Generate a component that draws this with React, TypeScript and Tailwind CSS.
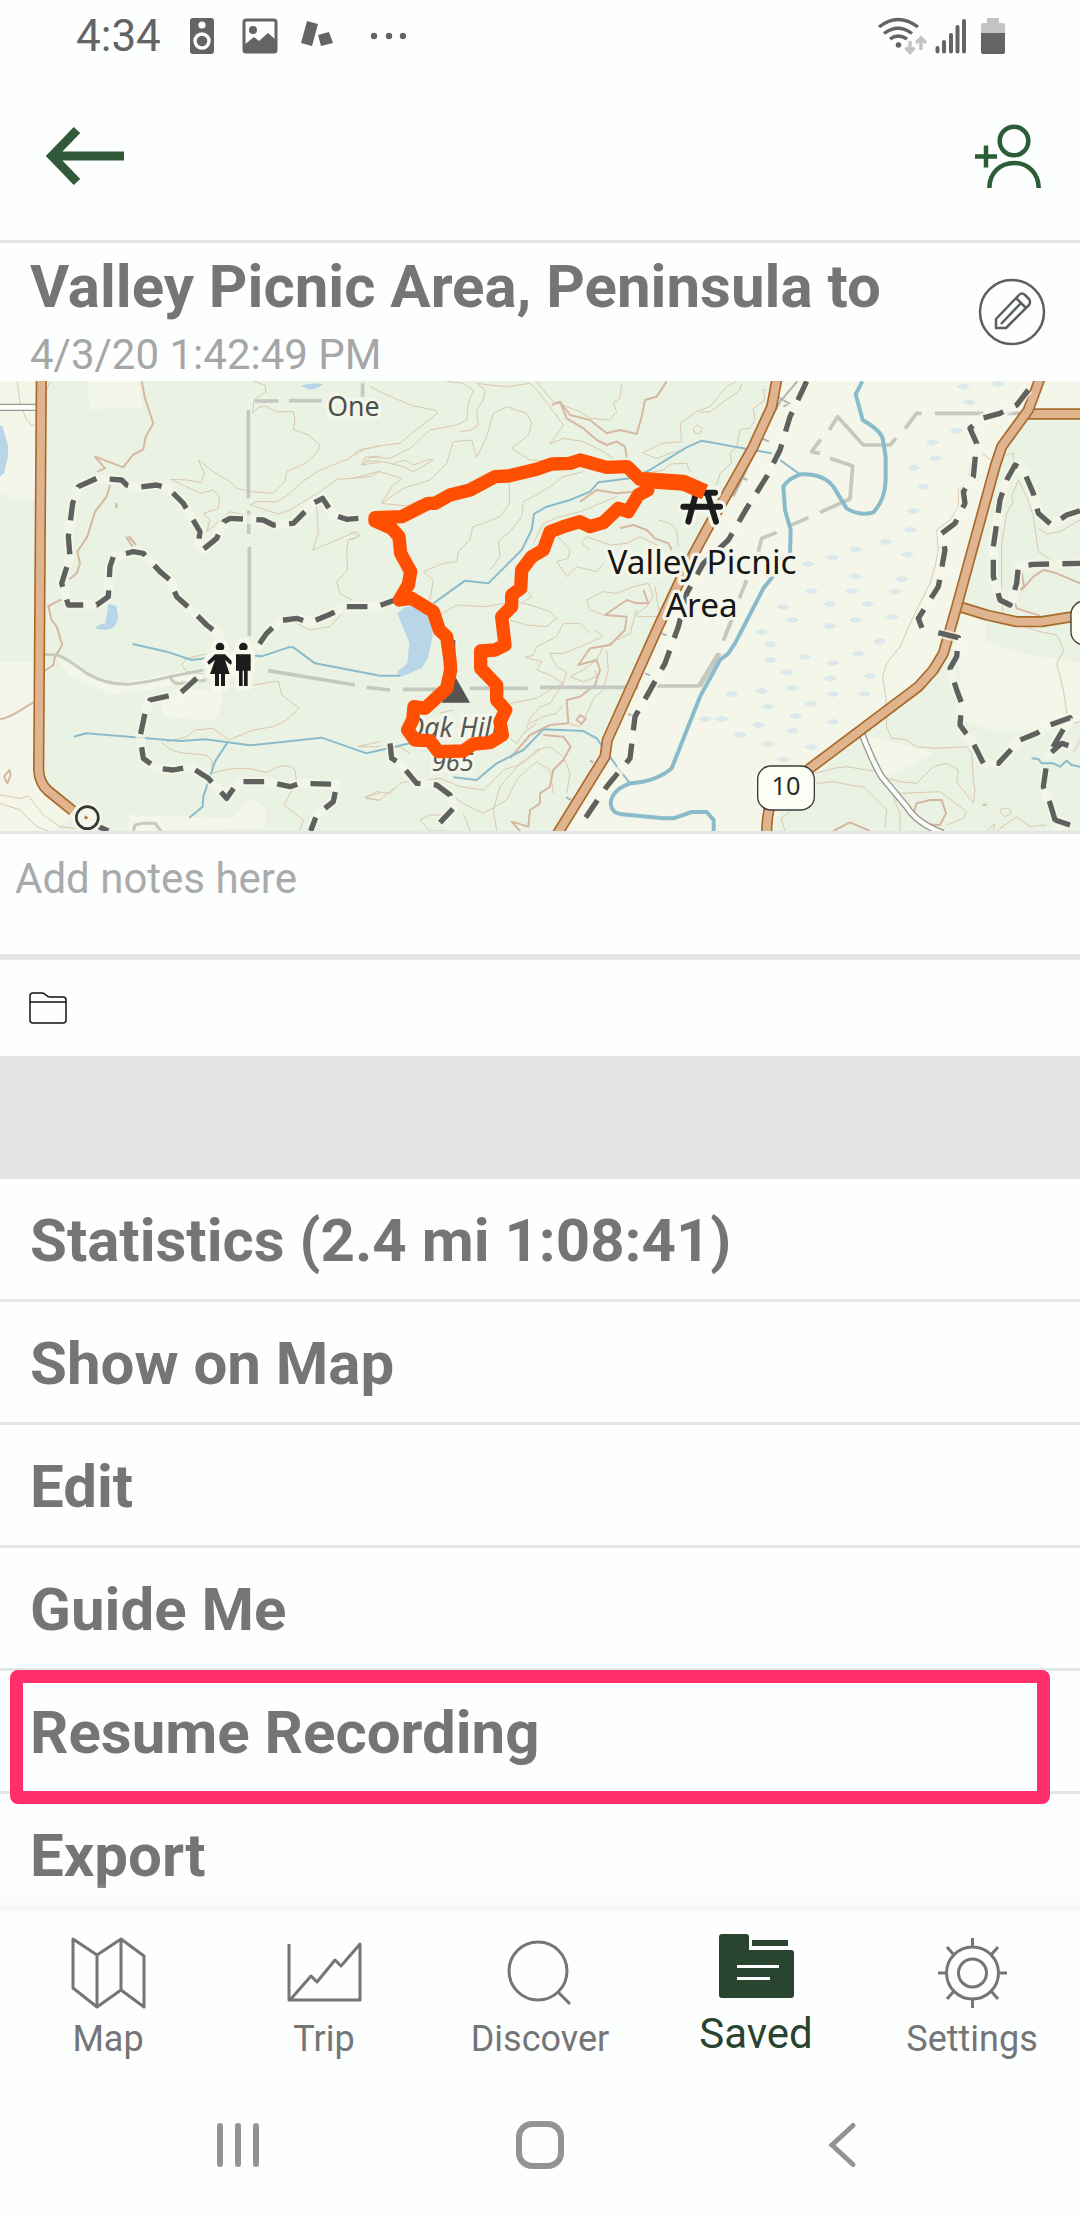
import type { ReactNode } from 'react';

const TRACK =
    'M1060 365L1000 337L885 328L870 328L832 290L770 292L690 270L660 280L605 282L560 298L475 318L435 320L360 360L300 375L255 400L235 400L155 440L75 443L75 453L125 475L147 500L152 550L182 605L175 645L148 690L185 685L250 725L268 780L290 800L300 870L302 900L290 955L225 1015L192 1010L188 1050L173 1080L195 1110L240 1112L265 1145L340 1143L370 1122L420 1118L457 1095L450 1055L467 1020L440 990L440 945L392 895L392 843L435 840L465 825L455 740L485 710L485 675L512 655L515 600L545 560L580 540L600 485L640 470L690 455L720 470L760 458L805 415L835 425L865 375L893 360L885 328';

const TRAILS = {
    left: [
        'M1075 445L1040 448L1000 435L968 385L940 400L880 460L820 465L790 450L690 445L672 455L650 505L610 538L595 520L600 485L550 400L505 355L470 345L410 352L380 345L365 330L290 325L235 350L218 400L205 500L210 560L185 640L205 705L290 705L325 680L330 590L340 560L400 545L430 550L480 605L510 630L530 680L580 725L620 765L665 800',
        'M1200 685L1130 710L1040 710L985 735L930 758L890 745L840 752L800 790L765 840',
        'M590 925L540 970L450 990L437 1020L420 1100L430 1165L470 1195L520 1200L570 1190L625 1225L680 1285L715 1235L800 1235L870 1250L900 1240L1010 1243L1000 1295L950 1335L932 1383',
        'M285 1365L325 1383',
    ],
    center: ['M120 1120L125 1165L150 1180L200 1240L260 1245L300 1275L310 1315L270 1358', 'M308 810V850'],
    right: [
        'M320 34L270 140L240 240L200 320L140 415L85 510L10 580L-40 670L-65 770L-105 880L-155 970L-195 1040L-210 1165L-280 1250L-355 1360',
        'M985 60L950 105L900 130L845 145L810 175L830 220L820 320L790 365L795 400L765 460L725 490L735 540L715 650L655 745L670 785',
        'M715 788L775 803L770 860L750 895L770 960L785 1000L780 1065L820 1120L850 1180L895 1180L960 1110L1010 1090L1050 1065L1110 1043L1045 1155L1085 1120L1115 1130',
        'M1038 1195L1030 1250L1050 1300L1065 1350L1085 1383M1065 1350L1110 1365',
        'M1140 422L1100 435L1055 465L1015 430L1000 370L970 300L945 285L920 330L900 390L880 530L880 620L900 690L930 705L950 640L955 590L1000 583L1140 580',
    ],
};

const CONTOURS = {
    left: [
        'M52 34L60 100L80 150L95 168L108 160M150 34L140 60',
        'M760 34L795 45L797 65L762 90L758 130Q775 105 800 110L830 125L880 125L885 150L880 178L925 195L960 225Q955 250 915 280L860 305L855 335L820 370L755 365L710 355L690 335L640 305L595 270L612 310L605 338L560 330L512 328L560 350L600 370L640 360L658 380L655 415L610 430L630 450L620 485L650 460L690 425L730 435',
        'M750 405L770 395L830 395L865 375L900 340L960 300L1050 265L1075 240L1140 228',
        'M750 405L835 432L870 420L960 365L1010 328L1060 325L1140 303',
        'M1140 258L1095 262L1085 285L1100 275L1140 272',
        'M950 410L955 490L938 540L1000 515L1060 488L1078 500L1045 510L1040 540L1043 600L1010 635L1020 670L1055 690',
        'M1045 710L990 770L930 780L880 755',
        'M760 945L835 933L845 975L898 1015L860 1050L820 1070L760 1080L685 1110L640 1075L585 1080L560 1100L500 1115',
        'M485 1118Q520 1150 560 1150L620 1155L637 1175L635 1210Q720 1180 800 1208Q860 1170 885 1200L890 1235L852 1305L910 1350L900 1383',
        'M0 1275L60 1285L85 1278L130 1335L180 1370L225 1375',
        'M0 1300L60 1320L110 1370L145 1383',
        'M1140 1270L1095 1280L1140 1293M1140 1115L1072 1130L1140 1130',
        'M620 852L560 865L545 885L560 905L610 912',
    ],
    center: [
        'M60 50L110 75L190 108L255 120L262 130L185 190L150 220L80 228L40 240L0 262',
        'M35 285L60 262L120 265L180 235L240 180L320 165L350 150L355 100L370 60L340 40L290 34',
        'M35 285L100 275L160 290L190 305L250 270L235 268L190 285L165 270L130 280',
        'M330 185L365 180L385 165L380 120L400 90L405 60L380 40L420 45L470 50L540 40L560 60L600 110L640 165L600 222L640 205L700 215L760 245L790 265',
        'M0 325L60 320L90 305L155 325L125 350L95 400L170 408L210 390',
        'M95 400L160 355L240 330L290 280L310 215L365 210L380 262L410 200L430 130L470 110L530 130L545 160L535 195L485 235L540 270L620 275',
        'M560 34L580 60L610 95L650 110L690 125L720 145L780 150L800 125L790 100L810 85L815 40',
        'M478 340L478 400L450 440L400 460L368 470L360 510L325 545L320 575L280 580L220 605L250 630L240 690',
        'M700 305L640 320L600 350L560 375L520 395L515 440L485 480L445 515L450 560L420 600',
        'M270 735L320 705L400 710L500 695L540 705L600 725L620 745L590 770L530 765L480 750',
        'M530 660L545 680L520 695M625 500L660 540L655 565L620 575L650 620L680 590L740 605L760 580',
        'M550 520L580 460L630 440L690 425L800 380M720 540L695 520L710 500L780 525L830 520L870 500L920 525L930 535',
        'M875 250L935 220L995 215L990 160L1040 125L1080 110L1130 50L1160 34',
        'M880 250L920 265L965 248L1000 240M870 315L940 300L960 282L1010 280L1020 305',
        'M1035 190L1030 175L1042 165L1057 175L1050 190ZM925 450L960 460L980 480L985 530',
        'M720 790L690 760L640 760L620 800L560 830L550 855L525 862L575 875L560 900L600 915L640 940L600 960L560 985L480 1000',
        'M735 780L760 800L690 830L640 850L600 850L620 890L650 905L640 940L600 1000L570 1010L540 1045L530 1075',
        'M770 840L775 900L760 960L735 980L720 1010L690 1070L660 1062',
        'M760 735L720 720L710 690L760 665L800 670L850 650L895 640L910 680L890 710L860 730L865 740L930 740L915 650',
        'M860 720L840 790L760 830L740 870L700 900L660 920L700 935L740 920L735 900',
        'M640 1005L620 1030L580 1040L540 1060M480 1105L500 1120L520 1090L560 1060',
        'M650 1270L660 1210L640 1160L600 1130L560 1140L520 1180L460 1200L400 1260L330 1250L270 1225L200 1235',
        'M610 1270L600 1200L560 1175L530 1200L500 1230L470 1290L400 1330L340 1300L310 1280',
        'M45 1285L80 1265L120 1270L150 1240L190 1230M45 1285L90 1290L130 1255',
        'M570 1140L540 1160L510 1180L450 1250L430 1320L440 1383M340 1330L360 1383M210 1350L240 1383L290 1383M210 1350L240 1335L300 1335',
        'M0 490L20 485L30 495L10 508L0 505M180 1150L150 1130L100 1140M270 1030L310 1020',
    ],
    right: [
        'M0 127L30 125L80 90L120 60L125 40',
        'M200 60L190 60L195 90L160 115L165 150L150 175L120 178L110 230L90 250L95 280L60 310L50 345',
        'M815 260L805 330L775 360L775 410L750 450L710 480L715 540L705 590L690 640L640 740L600 830L560 880L548 920L558 990L560 1070L575 1105L615 1108L650 1130L710 1135L800 1130L815 1150L820 1230L825 1260L820 1300L770 1235L775 1200L740 1180L700 1190L650 1240L600 1235L560 1225',
        'M845 250L880 275M920 255L940 250L940 275M955 330L980 380L1000 440L1015 545L1070 580M955 330L935 380L940 395L920 430L905 520L905 690L910 735',
        'M1140 450L1080 485L1040 492L1015 475',
        'M960 765L1020 785L1070 795L1092 840L1070 880L1090 960L1102 1040',
        'M345 1210L400 1195L440 1190L530 1205L560 1235M350 1240L400 1235L450 1245L490 1250L520 1280L560 1320L555 1370',
        'M580 1285L600 1330L600 1383M600 1270L720 1265L800 1325L790 1345L740 1365',
        'M905 1315L925 1315L935 1330L915 1340L900 1325ZM860 1383L885 1360L880 1383M890 1383L950 1340L990 1370L1040 1365',
        'M240 1350L270 1325M245 1350L255 1383M1140 1055L1120 1060M1140 1110L1130 1130L1120 1145',
    ],
};

const HEAVY_CONTOURS = {
    left: [
        'M425 34L435 85L460 160L437 200L430 238L398 255L370 292L285 260L315 295L292 305',
        'M330 345L320 380L285 425L262 500L232 545L240 580L230 610L208 628',
        'M185 688L145 708L155 750L170 770L187 825L165 860L160 885L130 905',
        'M100 997C60 1020 40 1040 0 1048',
        'M378 500L398 530M386 498L408 525M349 398V415M28 1200L12 1220L22 1240L32 1215Z',
    ],
    center: [
        'M605 105L630 95L660 135L720 150L770 190L810 180L860 192L875 140L885 90L920 80L950 34',
        'M630 95L650 145L700 175L740 210L770 225L800 215L825 230L830 262',
        'M845 600M880 660L895 700L860 700L830 690L765 735L830 740L825 780L780 825L720 835L685 885L740 870L750 900L735 945L690 980L650 990L655 1060L600 1065L540 1095L480 1165',
        'M690 1035L680 1050L695 1062L708 1045Z',
        'M580 1095L640 1100L662 1130L640 1170L610 1200L600 1250L570 1270L570 1300L540 1320L535 1370L485 1355L510 1383',
        'M810 475L850 465L890 480L915 505L955 520L965 540M690 395L740 360L800 370L850 365',
    ],
    right: [
        'M965 660L1000 620L1030 600L1070 610L1140 640M965 605L972 650L960 660M945 700L950 715L1020 737',
        'M650 1300L690 1290L725 1290L738 1330L720 1365L680 1363L640 1330Z',
        'M400 1383L450 1357L510 1383M848 1304H860',
    ],
};

const MARSH = [
    [790, 50], [893, 42], [808, 97], [770, 182], [697, 218], [706, 265], [641, 293], [669, 350], [641, 423], [631, 480],
    [558, 516], [466, 538], [398, 563], [622, 554], [325, 582], [466, 619], [605, 628], [334, 664], [455, 664], [586, 664],
    [250, 711], [390, 702], [502, 702], [278, 749], [466, 749], [577, 740], [390, 768], [185, 786], [212, 823], [540, 814],
    [315, 861], [474, 851], [212, 870], [398, 879], [260, 907], [390, 926], [510, 918], [278, 954], [185, 963], [95, 972],
    [398, 972], [493, 972], [204, 1010], [334, 1001], [287, 1038], [66, 1047], [175, 1065], [398, 1056], [121, 1095],
    [278, 1083], [204, 1122], [334, 1131], [250, 1168], [17, 1047],
];

// The map is drawn in three sheets side by side, each sheet with its own origin
function Sheet({ at, children }: { at: 'left' | 'center' | 'right'; children: ReactNode }) {
    const x = { left: 0, center: 1050, right: 2100 }[at];
    return <g transform={`translate(${x} -33)`}>{children}</g>;
}

const SHEETS = ['left', 'center', 'right'] as const;

function Road({ d }: { d: string }) {
    return (
        <>
            <path d={d} stroke="#a96a2b" strokeWidth="34" />
            <path d={d} stroke="#dfb48f" strokeWidth="24" />
        </>
    );
}

function TrailMap() {
    return (
        <svg viewBox="0 0 3240 1350" className="block h-auto w-full bg-[#eaf3e3]" fill="none" strokeLinejoin="round" role="img" aria-label="Recorded track on map">
            {/* Land */}
            <g fill="#f5f6ea">
                <Sheet at="left">
                    <path d="M0 33H115V387H40L0 370ZM0 875H110V1200L150 1260L230 1330L160 1383H0ZM265 33H415L425 112L268 118Z" />
                    <path d="M480 1000L560 960L668 960L655 1035L640 1052L495 1040ZM385 1335L700 1345L750 1285L795 1310L795 1375L385 1383ZM170 865L330 945L600 895L610 925L450 960L330 972L200 910Z" />
                </Sheet>
                <Sheet at="right">
                    <path d="M232 33H1140V130H980L905 230L770 700L700 900L655 950L490 1070L190 1383H-440L-280 1110L-50 600L80 370Z" />
                    <path d="M845 33H1140V130H990ZM785 720L855 740L855 810L960 850L1140 880V1060L900 1090L790 1050L770 800ZM500 1100L560 1110L700 1150L600 1200L550 1220Z" />
                </Sheet>
            </g>
            {/* Water */}
            <Sheet at="right">
                <g fill="#dbe9ea">
                    {MARSH.map(([cx, cy]) => (
                        <path key={`${cx}-${cy}`} d={`M${cx - 20} ${cy}Q${cx - 10} ${cy - 10} ${cx} ${cy - 9}Q${cx + 12} ${cy - 9} ${cx + 20} ${cy}Q${cx + 8} ${cy + 10} ${cx} ${cy + 9}Q${cx - 12} ${cy + 9} ${cx - 20} ${cy}Z`} />
                    ))}
                </g>
            </Sheet>
            <g fill="#b9d6e9">
                <Sheet at="left">
                    <path d="M0 165L8 170L24 225V260L12 310L0 320ZM325 702L350 708L355 745Q345 780 320 780L288 776Q286 765 315 760L322 725ZM903 48Q935 35 970 42Q945 62 925 58Z" />
                </Sheet>
                <Sheet at="center">
                    <path d="M142 730L165 712L205 705L245 750L248 800L235 860L215 895L150 922L142 905L172 880L178 820Z" />
                </Sheet>
            </g>
            {/* Contour lines */}
            {SHEETS.map((at) => (
                <Sheet key={at} at={at}>
                    <g stroke="#dcc7ae" strokeWidth="3">
                        {CONTOURS[at].map((d) => <path key={d} d={d} />)}
                    </g>
                    <g stroke="#d6b8a0" strokeWidth="6">
                        {HEAVY_CONTOURS[at].map((d) => <path key={d} d={d} />)}
                    </g>
                </Sheet>
            ))}
            {/* Boundaries and tracks */}
            <g stroke="#c4c8c0" strokeWidth="11">
                <Sheet at="left">
                    <path d="M745 120V385M746 422V492M748 530V798M765 93H835M867 92H965M1088 40V80M805 902L1065 945M1100 952L1170 960" />
                    <path d="M130 853L175 856Q200 865 260 910Q320 945 385 943Q440 938 510 920L610 900M510 920Q520 945 545 940L620 930M400 1383L405 1365L425 1360H465L483 1383" stroke="#c8cabb" strokeWidth="9" />
                </Sheet>
                <Sheet at="center">
                    <path d="M158 958H300M360 955H533M570 952H865M920 948H1045L1105 850M1120 812L1150 740" />
                </Sheet>
                <Sheet at="right">
                    <path d="M0 950L60 850M70 812L92 755M118 685L140 630M175 545L185 505L230 487M270 467L325 443M360 427L450 387L458 288L390 265M360 250L335 245L362 208M388 180L413 140L490 225H570L588 205M615 176L650 130H665M705 130H850M920 130H960" />
                    <path d="M292 34L240 95L185 200L130 320L100 380M232 80L270 102M185 205L207 215M120 320L142 330M250 110L262 104" stroke="#b3b3b3" strokeWidth="6" />
                    <path d="M-115 790L-100 796M-165 910L-150 916M-215 1032L-200 1038M-330 1172L-320 1178M-402 1282L-386 1290" stroke="#b3b3b3" strokeWidth="6" />
                </Sheet>
            </g>
            <g stroke="#8abbcb" strokeWidth="6">
                <Sheet at="left">
                    <path d="M398 822L500 845L575 870L620 865M765 857L785 859L865 832H880L945 880L1140 917L1200 917M222 1100L258 1090L540 1113L615 1108L750 1126L965 1103L1100 1150L1230 1120M682 1118L645 1175L610 1280L608 1310L568 1343" />
                </Sheet>
                <Sheet at="center">
                    <path d="M250 700L345 632L415 640L515 540L545 480L552 432L590 410L660 390L720 365L745 337L840 325L900 300L940 275L1010 232L1055 212L1265 250M1290 270L1350 313M310 1222L380 1230L440 1180L520 1140L580 1078L700 1083L740 1105L805 1195L840 1240" />
                </Sheet>
                <Sheet at="right">
                    <path d="M487 34L467 73L488 150Q540 180 548 205L557 260V330Q555 390 520 427Q480 440 440 415L400 350Q370 310 302 313Q265 325 250 350L255 420L272 480L270 550L210 630L190 655L105 820L85 850L60 870L0 980L-85 1195Q-130 1235 -210 1240Q-265 1260 -268 1300Q-265 1330 -235 1333L-110 1345H-80L-25 1326H20L41 1350V1390" strokeWidth="12" />
                    <path d="M995 1165L1015 1167L1025 1180L1060 1180L1080 1190L1100 1172L1115 1185L1140 1190" />
                </Sheet>
            </g>
            {/* Roads */}
            <Sheet at="left">
                <path d="M0 112H115" stroke="#979b98" strokeWidth="22" />
                <path d="M0 112H115" stroke="#fdfdf8" strokeWidth="14" />
                <Road d="M124 20L116 1200Q118 1240 145 1263L218 1322" />
            </Sheet>
            <Sheet at="right">
                <path d="M485 1090Q520 1180 545 1220L620 1310Q650 1360 730 1390" stroke="#9a9a94" strokeWidth="21" />
                <path d="M485 1090Q520 1180 545 1220L620 1310Q650 1360 730 1390" stroke="#fdfdfb" strokeWidth="13" />
                <Road d="M232 20L215 110L160 230L20 480L-45 600L-125 770L-278 1110L-285 1160L-430 1395" />
                <Road d="M975 132H1150" />
                <Road d="M772 708L860 735L950 755H1025L1150 735" />
                <Road d="M1022 20L985 120L905 230L885 290L770 710L730 850L700 900L655 950L330 1195L225 1280Q200 1310 200 1395" />
            </Sheet>
            {/* Trails */}
            {SHEETS.map((at) => (
                <Sheet key={at} at={at}>
                    {TRAILS[at].map((d) => (
                        <g key={d}>
                            <path d={d} stroke="#f5f5ea" strokeWidth="28" strokeOpacity="0.75" />
                            <path d={d} stroke="#5f615e" strokeWidth="16" strokeDasharray="62 40" />
                        </g>
                    ))}
                </Sheet>
            ))}
            {/* Labels under the track */}
            <g fontFamily="'Noto Sans', sans-serif" textAnchor="middle" paintOrder="stroke" stroke="#f5f6ea" strokeWidth="20">
                <Sheet at="center">
                    <path d="M275 998H360L316 920Z" fill="#555653" stroke="none" />
                    <text x="305" y="1100" fontSize="80" fontStyle="italic" fill="#585956">Oak Hill</text>
                    <text x="308" y="1203" fontSize="76" fontStyle="italic" fill="#585956">965</text>
                    <text x="10" y="137" fontSize="80" fill="#4c4e4b">One</text>
                    <g stroke="#f5f6ea" strokeWidth="38" strokeLinecap="round">
                        <path d="M1000 410H1110M1035 368H1095M1038 370L1015 455M1072 370L1098 455" />
                        <path d="M1000 410H1110M1035 368H1095M1038 370L1015 455M1072 370L1098 455" stroke="#1b1c1b" strokeWidth="18" />
                    </g>
                </Sheet>
                <Sheet at="right">
                    <text x="6" y="612" fontSize="100" fill="#161716">Valley Picnic</text>
                    <text x="5" y="740" fontSize="100" fill="#161716">Area</text>
                    <rect x="175" y="1190" width="166" height="128" rx="38" fill="#fcfdf5" stroke="#3a3b39" strokeWidth="8" />
                    <text x="258" y="1275" fontSize="76" fill="#2d2e2c" stroke="none">10</text>
                    <rect x="1115" y="695" width="166" height="128" rx="38" fill="#fcfdf5" stroke="#3a3b39" strokeWidth="8" />
                </Sheet>
            </g>
            <Sheet at="left">
                <g fill="#1b1c1b" stroke="#f7f7ec" strokeWidth="26" paintOrder="stroke">
                    <circle cx="660" cy="831" r="13" />
                    <path d="M645 853H675L699 877L692 884L675 870L689 912H675V948H663V912H657V948H645V912H630L645 870L627 884L621 876Z" />
                    <circle cx="730" cy="831" r="13" />
                    <path d="M708 853H752V902H743V948H732V902H728V948H717V902H708Z" />
                </g>
                <circle cx="262" cy="1343" r="33" fill="#f5f6ea" stroke="#f5f6ea" strokeWidth="26" />
                <circle cx="262" cy="1343" r="33" fill="#f5f6ea" stroke="#363735" strokeWidth="8" />
                <path d="M254 1340L262 1346" stroke="#b87a3c" strokeWidth="9" />
            </Sheet>
            <Sheet at="center">
                <path d={TRACK} stroke="#ff4f02" strokeWidth="40" />
                <path d="M1065 366L1000 338L880 330" stroke="#ff4f02" strokeWidth="48" />
            </Sheet>
        </svg>
    );
}

function StatusBar() {
    return (
        <div className="flex h-[72px] shrink-0 items-center justify-between pr-[75px] pl-[76px] text-[#636466]">
            <div className="flex items-center">
                <span className="w-[114px] text-[44px] leading-[52px]">4:34</span>
                <svg width="24" height="36" viewBox="0 0 24 36">
                    <rect width="24" height="36" rx="3" fill="currentColor" />
                    <circle cx="12" cy="7" r="3.6" fill="#fff" />
                    <circle cx="12" cy="23" r="7" fill="currentColor" stroke="#fff" strokeWidth="3.4" />
                </svg>
                <svg width="36" height="36" viewBox="0 0 36 36" className="ml-7">
                    <rect x="2" y="2" width="32" height="32" rx="2" fill="none" stroke="currentColor" strokeWidth="3" />
                    <circle cx="11" cy="12" r="4" fill="currentColor" />
                    <path d="M2 27L12 19L17 23L26 15L34 22V34H2Z" fill="currentColor" />
                </svg>
                <svg width="32" height="26" viewBox="0 0 32 26" className="mb-[4px] ml-[23px]" fill="currentColor">
                    <path d="M6 0L17 3L11 25L0 22ZM17 14L28 11L32 22L20 25Z" />
                </svg>
                <svg width="36" height="8" viewBox="0 0 36 8" className="ml-[37px]" fill="currentColor">
                    <circle cx="4" cy="4" r="3.2" />
                    <circle cx="19" cy="4" r="3.2" />
                    <circle cx="34" cy="4" r="3.2" className="-translate-x-px" />
                </svg>
            </div>
            <div className="flex items-center">
                <svg width="50" height="38" viewBox="0 0 50 38" fill="none" stroke="currentColor" strokeWidth="3.4">
                    <path d="M2 10Q21 -5 41 10M7 16.500Q21 6 35 16.500M13 22Q21 16 30 22" />
                    <circle cx="21.500" cy="28" r="2.800" fill="currentColor" stroke="none" />
                    <path d="M33 24V34M28.500 30.500L33 35.500L37.500 30.500M44 33V22M39 26L44 21L49 26" stroke="#c3c3c5" />
                </svg>
                <svg width="32" height="36" viewBox="0 0 32 36" className="ml-2" stroke="currentColor" strokeWidth="4" strokeLinecap="round">
                    <path d="M2.500 30V33.500M9 24V33.500M16 17V33.500M22.500 9V33.500M29 3V33.500" />
                </svg>
                <svg width="24" height="38" viewBox="0 0 24 38" className="ml-[14px]">
                    <path d="M6 1H18V6H22Q24 6 24 8V18H0V8Q0 6 2 6H6Z" fill="#c3c3c5" />
                    <path d="M0 16H24V35Q24 37 22 37H2Q0 37 0 35Z" fill="currentColor" />
                </svg>
            </div>
        </div>
    );
}

function TopBar() {
    return (
        <header className="flex h-[171px] shrink-0 items-center justify-between border-b-[3px] border-[#e3e5e4] pr-[38px] pl-[45px]">
            <button type="button" aria-label="Back">
                <svg width="80" height="60" viewBox="0 0 80 60" fill="none" stroke="#315a3b" strokeWidth="9">
                    <path d="M79 30H8M32 4L7 30L32 56" />
                </svg>
            </button>
            <button type="button" aria-label="Invite a friend">
                <svg width="68" height="66" viewBox="0 0 68 66" fill="none" stroke="#2b5d37" strokeWidth="4.5">
                    <path d="M1 33.500H23M12 22.500V44.500" />
                    <circle cx="40" cy="18" r="14.300" />
                    <path d="M15.300 65C15.500 50 26 40 40 40S64.500 50 64.700 65" />
                </svg>
            </button>
        </header>
    );
}

const actions = ['Statistics (2.4 mi 1:08:41)', 'Show on Map', 'Edit', 'Guide Me', 'Resume Recording', 'Export'];

const tabs = [
    {
        label: 'Map',
        icon: <path d="M2 2L26 18L50 2L73 19V70L50 53L26 70L2 51ZM26 18V70M50 2V53" />,
    },
    {
        label: 'Trip',
        icon: <path d="M2 7V63H73V7L54 29L48 23L30 45L24 39L3 63" />,
    },
    {
        label: 'Discover',
        icon: <path d="M64 34A29 29 0 1 1 6 34A29 29 0 1 1 64 34M55 55L67 67" />,
    },
    {
        label: 'Saved',
        icon: (
            <>
                <path d="M3 0H27Q30 0 30 3V16H72Q75 16 75 19V61Q75 64 72 64H3Q0 64 0 61V3Q0 0 3 0ZM33 6H69V12H33Z" fill="currentColor" stroke="none" />
                <path d="M18 32.500H60M18 44.500H51" stroke="#fff" />
            </>
        ),
    },
    {
        label: 'Settings',
        icon: (
            <>
                <circle cx="37.500" cy="36" r="26" />
                <circle cx="37.500" cy="36" r="14" />
                <path d="M37.500 10V1M37.500 62V71M11.500 36H3M63.500 36H72M19 18L12 10M56 18L63 10M19 54L12 62M56 54L63 62" />
            </>
        ),
    },
];

export default function App() {
    return (
        <div className="flex h-screen flex-col overflow-hidden bg-[#fdfefe] font-['Roboto',sans-serif] text-[#747577]">
            <StatusBar />
            <TopBar />
            <main className="relative min-h-0 flex-1 overflow-hidden">
                <section className="flex items-center justify-between pr-[34px] pl-[30px]">
                    <div className="pt-2 pb-[2px]">
                        <h1 className="text-[60px] leading-[72px] font-bold">Valley Picnic Area, Peninsula to</h1>
                        <p className="mt-2 text-[42px] leading-[48px] text-[#a5a6a8]">4/3/20 1:42:49 PM</p>
                    </div>
                    <button type="button" aria-label="Edit title">
                        <svg width="68" height="68" viewBox="0 0 68 68" fill="none" stroke="#5c5f60" strokeWidth="2.500">
                            <circle cx="34" cy="34" r="32" />
                            <path d="M18 41L41 17Q44 14 47 17L51 21Q53 24 51 27L28 50H18ZM38 20L48 30M43 25L23 46" strokeLinejoin="round" />
                        </svg>
                    </button>
                </section>
                <TrailMap />
                <textarea
                    aria-label="Notes"
                    placeholder="Add notes here"
                    className="block h-[129px] w-full resize-none border-t-[3px] border-b-[6px] border-[#e3e5e6] px-[15px] pt-[21px] text-[42px] leading-[48px] outline-none placeholder:text-[#a9aaac]"
                />
                <button type="button" aria-label="Choose folder" className="flex h-24 w-full items-center pl-[29px]">
                    <svg width="38" height="32" viewBox="0 0 38 32" fill="none" stroke="#111" strokeWidth="1.500">
                        <path d="M1 28V4Q1 1 4 1H13Q15 1 17 3T21 5H34Q37 5 37 8V28Q37 31 34 31H4Q1 31 1 28ZM1 10H37" />
                    </svg>
                </button>
                <div className="h-[123px] bg-[#e4e5e7]" />
                <ul>
                    {actions.map((action) => (
                        <li key={action} className="relative border-b-[3px] border-[#e3e5e6]">
                            <button type="button" className="block w-full px-[30px] pt-[26px] pb-[22px] text-left text-[60px] leading-[72px] font-bold">
                                {action}
                            </button>
                            {action === 'Resume Recording' && (
                                <div className="pointer-events-none absolute -top-px right-[30px] -bottom-[13px] left-[10px] z-10 rounded-lg border-[13px] border-[#ff2f6c]" />
                            )}
                        </li>
                    ))}
                </ul>
                <div className="absolute inset-x-0 bottom-0 h-7 bg-linear-to-b from-transparent to-[#f6f7f9]" />
            </main>
            <nav className="grid h-[159px] shrink-0 grid-cols-5">
                {tabs.map(({ label, icon }) => {
                    const active = label === 'Saved';
                    return (
                        <a
                            key={label}
                            href={`#${label.toLowerCase()}`}
                            aria-current={active ? 'page' : undefined}
                            className={`flex flex-col items-center ${active ? 'pt-[23px] text-[42px] leading-[48px] text-[#29452f]' : 'pt-[26px] text-[36px] leading-[42px]'}`}
                        >
                            <svg width="75" height={active ? 68 : 72} viewBox={active ? '0 0 75 68' : '0 0 75 72'} fill="none" stroke="currentColor" strokeWidth="3" strokeLinejoin="round" className={active ? 'mb-2' : 'mb-[9px]'}>
                                {icon}
                            </svg>
                            {label}
                        </a>
                    );
                })}
            </nav>
            <div className="flex h-[150px] shrink-0 items-center justify-around px-[87px] text-[#929395]">
                <button type="button" aria-label="Recent apps">
                    <svg width="48" height="48" viewBox="0 0 48 48" stroke="currentColor" strokeWidth="6" strokeLinecap="round">
                        <path d="M6 5V43M24 5V43M42 5V43" />
                    </svg>
                </button>
                <button type="button" aria-label="Home">
                    <svg width="48" height="48" viewBox="0 0 48 48" fill="none" stroke="currentColor" strokeWidth="6">
                        <rect x="3" y="3" width="42" height="42" rx="13" />
                    </svg>
                </button>
                <button type="button" aria-label="System back">
                    <svg width="48" height="48" viewBox="0 0 48 48" fill="none" stroke="currentColor" strokeWidth="5" strokeLinecap="round">
                        <path d="M35 4.500L14 24L35 43.500" />
                    </svg>
                </button>
            </div>
        </div>
    );
}
